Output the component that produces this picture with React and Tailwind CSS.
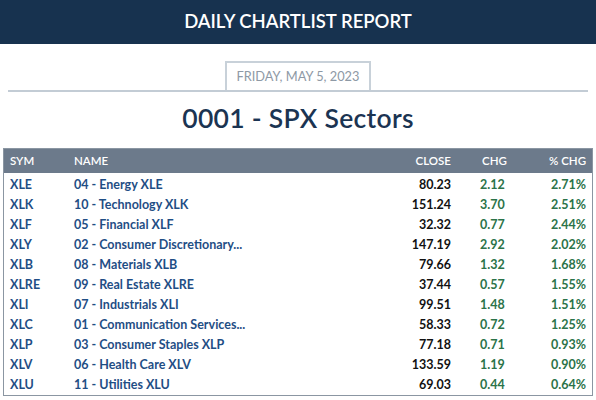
const rows = [
  ['XLE', '04 - Energy XLE', '80.23', '2.12', '2.71%'],
  ['XLK', '10 - Technology XLK', '151.24', '3.70', '2.51%'],
  ['XLF', '05 - Financial XLF', '32.32', '0.77', '2.44%'],
  ['XLY', '02 - Consumer Discretionary...', '147.19', '2.92', '2.02%'],
  ['XLB', '08 - Materials XLB', '79.66', '1.32', '1.68%'],
  ['XLRE', '09 - Real Estate XLRE', '37.44', '0.57', '1.55%'],
  ['XLI', '07 - Industrials XLI', '99.51', '1.48', '1.51%'],
  ['XLC', '01 - Communication Services...', '58.33', '0.72', '1.25%'],
  ['XLP', '03 - Consumer Staples XLP', '77.18', '0.71', '0.93%'],
  ['XLV', '06 - Health Care XLV', '133.59', '1.19', '0.90%'],
  ['XLU', '11 - Utilities XLU', '69.03', '0.44', '0.64%'],
];

const cols = 'grid grid-cols-[64px_1fr_80px_55px_80px] px-[6px] items-center';

export default function App() {
  return (
    <div className="w-[596px] h-[400px] bg-white overflow-hidden font-['Lato',sans-serif]">
      <div className="h-[44px] bg-[#17324f] flex items-center justify-center text-white text-[18.5px] font-semibold">
        DAILY CHARTLIST REPORT
      </div>

      <div className="mt-[17px] mx-2 border-b-2 border-[#c3ccd5] flex justify-center">
        <div className="h-[29px] border-2 border-b-0 border-[#c8d1d9] px-[10px] flex items-center text-[12.8px] text-[#8e99a5]">
          FRIDAY, MAY 5, 2023
        </div>
      </div>

      <h1 className="mt-[7px] h-[49px] text-center text-[26.5px] font-semibold text-[#1b3452] tracking-[0.3px]">
        0001 - SPX Sectors
      </h1>

      <div className="mx-[3px] border border-[#8b96a2]">
        <div className={cols + ' h-[24px] bg-[#6c7a8b] text-white text-[11.5px] font-semibold'}>
          <div>SYM</div>
          <div>NAME</div>
          <div className="text-right">CLOSE</div>
          <div className="pl-[31px]">CHG</div>
          <div className="text-right">% CHG</div>
        </div>
        <div className="pt-[2px]">
          {rows.map((r) => (
            <div key={r[0]} className={cols + ' h-[20px] text-[12.5px] font-bold'}>
              <div className="text-[#1f4e85]">{r[0]}</div>
              <div className="text-[#1f4e85] whitespace-nowrap">{r[1]}</div>
              <div className="text-right text-[#111]">{r[2]}</div>
              <div className="pl-[29px] text-[#2b7349]">{r[3]}</div>
              <div className="text-right text-[#2b7349]">{r[4]}</div>
            </div>
          ))}
        </div>
      </div>
    </div>
  );
}
